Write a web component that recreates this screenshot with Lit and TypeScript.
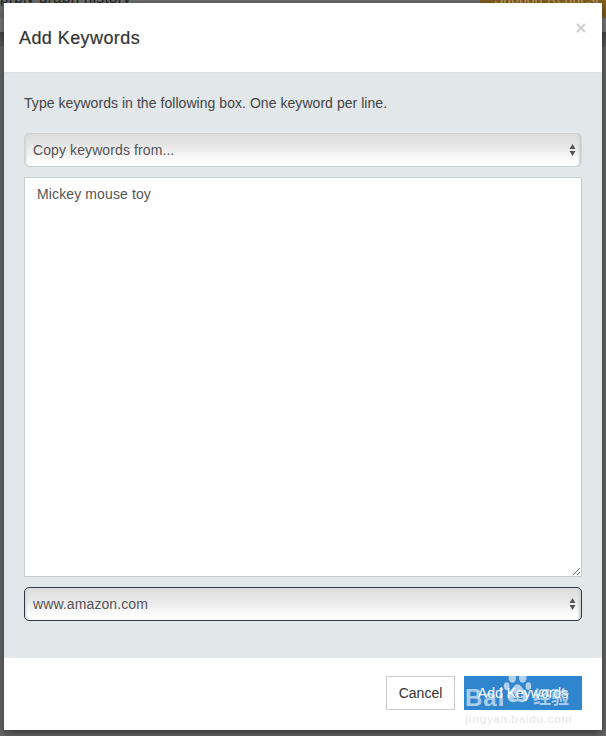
import { LitElement, html, css } from "lit";
import { customElement } from "lit/decorators.js";

@customElement("app-root")
export class AppRoot extends LitElement {
  static styles = css`
    :host {
      display: block;
      width: 606px;
      height: 736px;
      overflow: hidden;
      position: relative;
      background: #686868;
      font-family: "Liberation Sans", Arial, sans-serif;
    }
    .backdrop {
      position: absolute;
      inset: 0;
      overflow: hidden;
    }
    .bg-top {
      height: 18px;
      background: #6f6f6f;
      display: flex;
      justify-content: space-between;
    }
    .bg-left {
      display: flex;
      gap: 10px;
    }
    .bg-text {
      font-size: 15px;
      line-height: 15px;
      margin-top: -10px;
      color: #222;
      white-space: nowrap;
      letter-spacing: 0.4px;
    }
    .bg-btn {
      width: 126px;
      height: 18px;
      background: #85601f;
      overflow: hidden;
      color: #c2a068;
      font-size: 14px;
      line-height: 14px;
      white-space: nowrap;
      padding-left: 14px;
      box-sizing: border-box;
    }
    .bg-btn span {
      display: block;
      margin-top: -8px;
    }
    .bg-mid {
      height: 14px;
      background: #7a7a7a;
    }
    .bg-band {
      height: 15px;
      background: linear-gradient(#484848, #5e5e5e);
    }
    .modal {
      position: absolute;
      left: 4px;
      top: 3px;
      width: 598px;
      height: 727px;
      background: #fff;
      display: flex;
      flex-direction: column;
      box-shadow: 0 3px 9px rgba(0, 0, 0, 0.5);
    }
    .header {
      height: 70px;
      box-sizing: border-box;
      border-bottom: 1px solid #dde2e5;
      padding: 2px 15px 0;
      display: flex;
      align-items: center;
      justify-content: space-between;
      position: relative;
    }
    .title {
      font-size: 18px;
      font-weight: 400;
      color: #333;
      -webkit-text-stroke: 0.2px #333;
      letter-spacing: 0.42px;
    }
    .close {
      position: absolute;
      right: 15px;
      top: 19px;
      width: 12px;
      height: 12px;
    }
    .body {
      flex: 1;
      background: #e2e7ea;
      padding: 0 20px;
      display: flex;
      flex-direction: column;
    }
    .hint {
      font-size: 14px;
      line-height: 18px;
      color: #444;
      margin-top: 21px;
      letter-spacing: 0.05px;
    }
    .select {
      box-sizing: border-box;
      height: 34px;
      border: 1px solid #cfd3d6;
      border-radius: 5px;
      background: linear-gradient(#dedede 0%, #e6e6e6 35%, #fdfdfd 85%, #fff 100%);
      box-shadow: inset 2px 0 2px -1px #d0d0d0, inset -3px 0 2px -1px #d0d0d0;
      display: flex;
      align-items: center;
      justify-content: space-between;
      padding: 0 5px 0 8px;
      font-size: 14px;
      color: #555;
      letter-spacing: 0.1px;
    }
    .select.first {
      margin-top: 21px;
    }
    .select.focus {
      border-color: #34384a;
      margin-top: 10px;
    }
    .updown {
      width: 7px;
      height: 14px;
      display: block;
    }
    textarea {
      display: block;
      box-sizing: border-box;
      margin: 10px 0 0;
      width: 100%;
      height: 400px;
      border: 1px solid #c9cdd0;
      border-radius: 0;
      background: #fff;
      padding: 7px 12px;
      font: 14px/18px "Liberation Sans", Arial, sans-serif;
      letter-spacing: 0.12px;
      color: #555;
      outline: none;
    }
    .footer {
      height: 73px;
      box-sizing: border-box;
      border-top: 1px solid #e8ebed;
      display: flex;
      justify-content: flex-end;
      align-items: flex-start;
      gap: 9px;
      padding: 18px 20px 0 0;
    }
    .btn {
      box-sizing: border-box;
      height: 34px;
      font-size: 14px;
      display: flex;
      align-items: center;
      justify-content: center;
    }
    .cancel {
      width: 69px;
      border: 1px solid #ccc;
      color: #333;
      background: #fff;
    }
    .primary {
      width: 118px;
      background: #3085cf;
      color: #fff;
    }
    .mark {
      position: absolute;
      left: 465px;
      top: 668px;
      width: 110px;
      height: 60px;
      pointer-events: none;
      color: rgba(255, 255, 255, 0.62);
    }
    .mark-bai {
      position: absolute;
      left: 0;
      top: 16px;
      font: 700 24px/28px "Liberation Sans", sans-serif;
      letter-spacing: 1px;
    }
    .mark-cn {
      position: absolute;
      left: 68px;
      top: 15px;
      font: 700 18px/26px "Noto Sans CJK SC", sans-serif;
    }
    .mark-url {
      position: absolute;
      left: 0;
      top: 44px;
      font: 700 11.5px/14px "Liberation Sans", sans-serif;
      color: rgba(210, 210, 210, 0.45);
      letter-spacing: 0.35px;
    }
    .mark-paw {
      position: absolute;
      left: 38px;
      top: 4px;
      width: 30px;
      height: 33px;
    }
  `;

  private updown() {
    return html`<svg class="updown" viewBox="0 0 7 14">
      <path d="M3.5 1 6.5 6H.5zM3.5 13 .5 8h6z" fill="#555"></path>
    </svg>`;
  }

  render() {
    return html`
      <div class="backdrop">
        <div class="bg-top">
          <div class="bg-left">
            <span class="bg-text">prbly drabh history</span>
            <span class="bg-text">-</span>
          </div>
          <span class="bg-btn"><span>Support Request</span></span>
        </div>
        <div class="bg-mid"></div>
        <div class="bg-band"></div>
      </div>
      <div class="modal">
        <div class="header">
          <div class="title">Add Keywords</div>
          <svg class="close" viewBox="0 0 12 12">
            <path d="M2 2 10 10M10 2 2 10" stroke="#cfcfcf" stroke-width="2.2" fill="none"></path>
          </svg>
        </div>
        <div class="body">
          <div class="hint">Type keywords in the following box. One keyword per line.</div>
          <div class="select first"><span>Copy keywords from...</span>${this.updown()}</div>
          <textarea .value=${"Mickey mouse toy"}></textarea>
          <div class="select focus"><span>www.amazon.com</span>${this.updown()}</div>
        </div>
        <div class="footer">
          <div class="btn cancel">Cancel</div>
          <div class="btn primary">Add Keywords</div>
        </div>
      </div>
      <div class="mark">
        <span class="mark-bai">Bai</span>
        <svg class="mark-paw" viewBox="0 0 30 35">
          <g fill="rgba(255,255,255,.62)">
            <ellipse cx="9" cy="6" rx="4" ry="5.5"></ellipse>
            <ellipse cx="20" cy="6" rx="4" ry="5.5"></ellipse>
            <ellipse cx="3" cy="15" rx="3" ry="4"></ellipse>
            <ellipse cx="26" cy="15" rx="3" ry="4"></ellipse>
            <path fill-rule="evenodd" d="M14.5 13c4 0 5 5 9 8 3 3 2 11-4 11-2 0-3-1-5-1s-3 1-5 1c-6 0-7-8-4-11 4-3 5-8 9-8zM10 21v5c0 3 2 3 4 3M15 21v5c0 3 2 3 5 3v-8z"></path>
          </g>
        </svg>
        <span class="mark-cn">经验</span>
        <span class="mark-url">jingyan.baidu.com</span>
      </div>
    `;
  }
}
